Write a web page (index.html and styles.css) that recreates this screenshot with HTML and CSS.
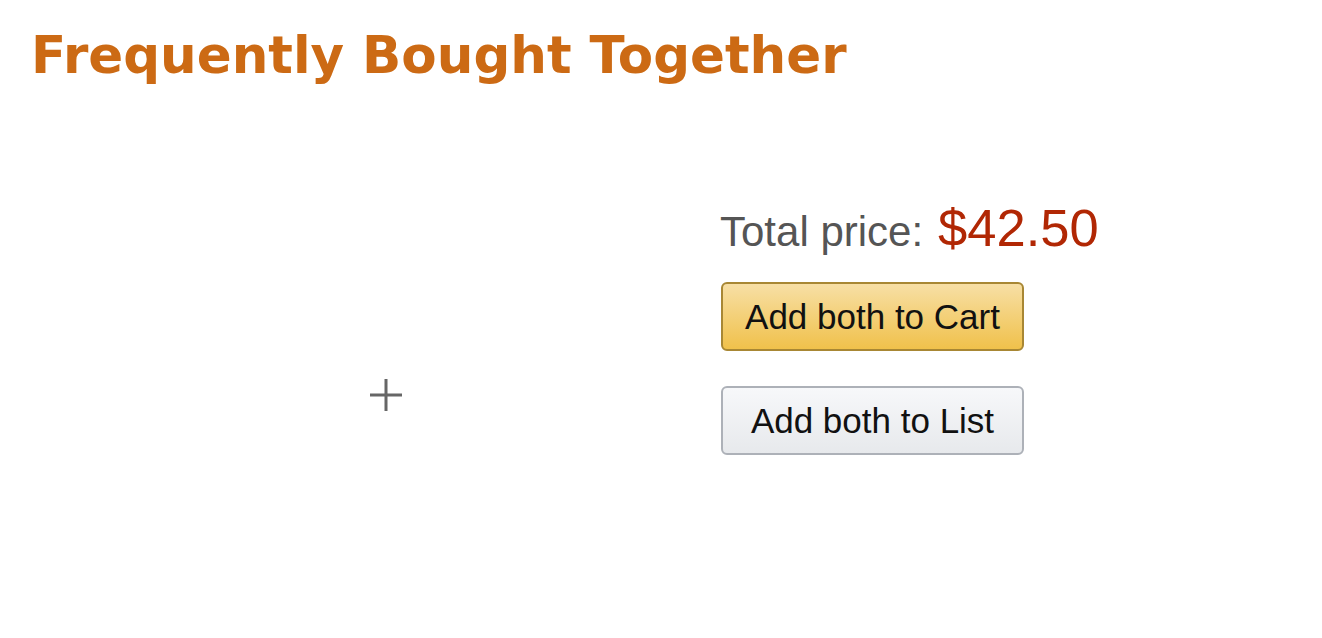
FILE: index.html
```html
<!DOCTYPE html>
<html>
<head>
<meta charset="utf-8">
<link rel="stylesheet" href="styles.css">
</head>
<body>
<div class="page">
  <h1 class="title">Frequently Bought Together</h1>
  <div class="bundle">
    <div class="items">
      <svg class="plus" width="34" height="34" viewBox="0 0 34 34"><path d="M17 1V33M1 17H33" stroke="#666" stroke-width="3" fill="none"/></svg>
    </div>
    <div class="summary">
      <div class="total"><span class="label">Total price:</span><span class="price">$42.50</span></div>
      <button class="btn btn-cart">Add both to Cart</button>
      <button class="btn btn-list">Add both to List</button>
    </div>
  </div>
</div>
</body>
</html>
```
FILE: styles.css
```css
html, body { margin: 0; padding: 0; background: #fff; }
.page { padding: 27px 31px 0; }
.title {
  margin: 0;
  font-family: "DejaVu Sans", Verdana, sans-serif;
  font-weight: bold;
  font-size: 51.5px;
  line-height: 56px;
  color: #cc6a14;
}
.bundle { display: flex; margin-top: 113px; }
.items {
  width: 690px;
  display: flex;
  justify-content: center;
  align-items: center;
  padding-left: 20px;
  box-sizing: border-box;
  padding-top: 138px;
}
.summary {
  display: flex;
  flex-direction: column;
  align-items: flex-start;
  font-family: "Liberation Sans", Arial, sans-serif;
}
.total { line-height: 60px; white-space: nowrap; margin-left: -1px; margin-top: 2px; }
.label { font-size: 42px; color: #555; margin-right: 15px; }
.price { font-size: 52.5px; color: #b12704; }
.btn {
  font-family: "Liberation Sans", Arial, sans-serif;
  font-size: 35px;
  color: #111;
  width: 303px;
  height: 69px;
  border-radius: 6px;
  padding: 0;
  text-align: center;
  margin-left: 0;
}
.btn-cart {
  margin-top: 11px;
  border: 2px solid #a88734;
  background: linear-gradient(#f7dfa5, #f0c14b);
}
.btn-list {
  margin-top: 35px;
  border: 2px solid #adb1b8;
  background: linear-gradient(#f7f8fa, #e7e9ec);
}
```
